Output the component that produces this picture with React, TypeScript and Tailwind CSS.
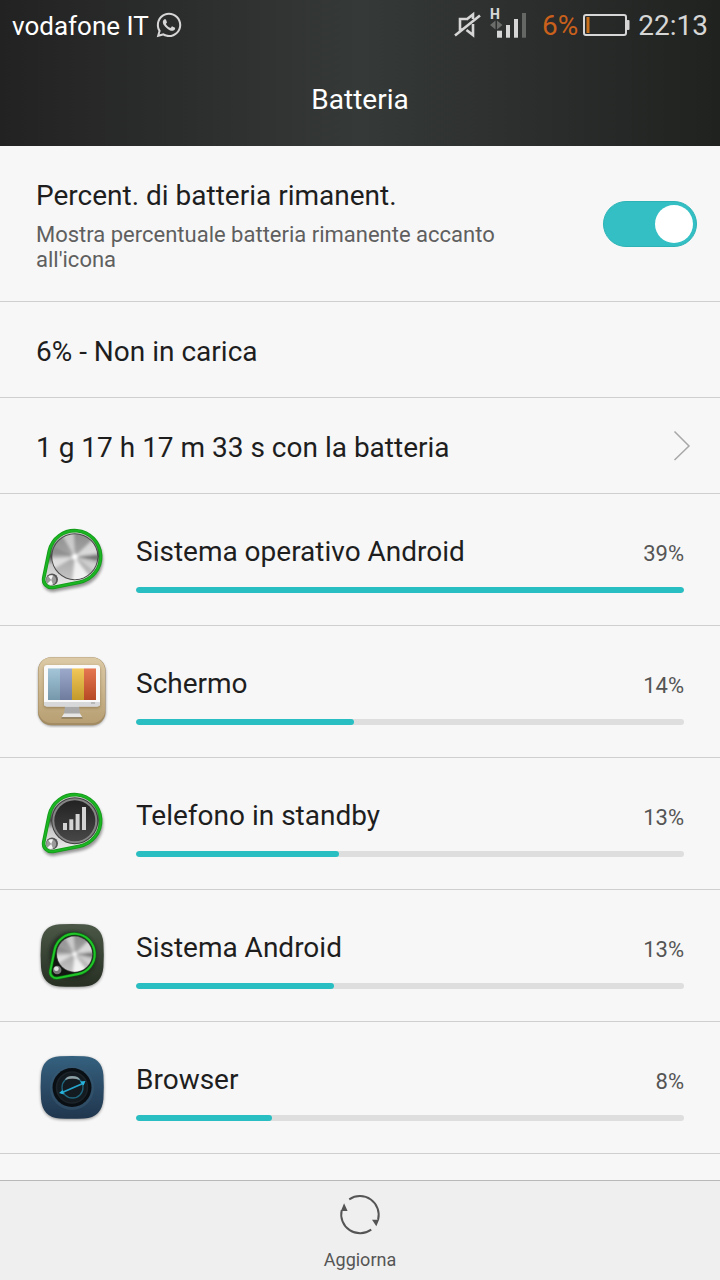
import { useState } from 'react';
import { FaWhatsapp } from 'react-icons/fa';

type IconName = 'knob' | 'screen' | 'standby' | 'system' | 'browser';

interface Usage {
  name: string;
  percent: number;
  bar: number;
  icon: IconName;
}

const usages: Usage[] = [
  { name: 'Sistema operativo Android', percent: 39, bar: 100, icon: 'knob' },
  { name: 'Schermo', percent: 14, bar: 39.8, icon: 'screen' },
  { name: 'Telefono in standby', percent: 13, bar: 37, icon: 'standby' },
  { name: 'Sistema Android', percent: 13, bar: 36.1, icon: 'system' },
  { name: 'Browser', percent: 8, bar: 24.8, icon: 'browser' },
];

const BELT = 'M13.3 26.9 A26 26 0 1 1 43.5 58.2 L17 63.4 A8 8 0 0 1 7.7 54.2 Z';
const SQUIRCLE =
  'M24 4.3 Q36 3.6 48 4.3 Q66 5 67.4 23 Q68.2 35 67.4 47 Q66 65.5 48 66.5 Q36 67.2 24 66.5 Q6.4 65.5 5 47 Q4.2 35 5 23 Q6.4 5 24 4.3 Z';

// Gradients and filters shared by all app icons
function IconDefs() {
  return (
    <svg width="0" height="0" className="absolute" aria-hidden="true">
      <defs>
        <linearGradient id="steel" x1="0" y1="0" x2="0" y2="1">
          <stop offset="0" stopColor="#8f8f8f" />
          <stop offset="0.5" stopColor="#a6a6a6" />
          <stop offset="1" stopColor="#c4c4c4" />
        </linearGradient>
        <linearGradient id="plate" x1="0" y1="0" x2="0" y2="1">
          <stop offset="0" stopColor="#e4e4e4" />
          <stop offset="0.45" stopColor="#4c4c4c" />
          <stop offset="0.6" stopColor="#c8c8c8" />
          <stop offset="1" stopColor="#eeeeee" />
        </linearGradient>
        <linearGradient id="darkDisc" x1="0" y1="0" x2="0" y2="1">
          <stop offset="0" stopColor="#222222" />
          <stop offset="1" stopColor="#474747" />
        </linearGradient>
        <linearGradient id="olive" x1="0" y1="0" x2="0" y2="1">
          <stop offset="0" stopColor="#4b5747" />
          <stop offset="1" stopColor="#273023" />
        </linearGradient>
        <linearGradient id="navy" x1="0" y1="0" x2="0" y2="1">
          <stop offset="0" stopColor="#34617f" />
          <stop offset="0.5" stopColor="#2b4b66" />
          <stop offset="1" stopColor="#20364e" />
        </linearGradient>
        <linearGradient id="sand" x1="0" y1="0" x2="0" y2="1">
          <stop offset="0" stopColor="#dccaa6" />
          <stop offset="1" stopColor="#b89f73" />
        </linearGradient>
        <linearGradient id="shine" x1="0" y1="0" x2="0" y2="1">
          <stop offset="0" stopColor="#ffffff" stopOpacity="0.18" />
          <stop offset="1" stopColor="#000000" stopOpacity="0.18" />
        </linearGradient>
        <clipPath id="discClip">
          <circle cx="38.8" cy="32.7" r="22.5" />
        </clipPath>
        <filter id="soft" x="-30%" y="-30%" width="160%" height="160%">
          <feGaussianBlur stdDeviation="1.8" />
        </filter>
      </defs>
    </svg>
  );
}

function Belt() {
  return (
    <>
      <path d={BELT} fill="url(#plate)" />
      <path d={BELT} fill="none" stroke="#149a1a" strokeWidth="3.6" strokeLinejoin="round" />
      <path d={BELT} fill="none" stroke="#1bb422" strokeWidth="2" strokeLinejoin="round" />
      <circle cx="16" cy="55.6" r="6" fill="#555555" />
      <circle cx="15.2" cy="56" r="5" fill="#9a9a9a" />
      <path d="M15.2 56 L11.5 59.5 A5 5 0 0 0 17 60.6 Z M15.2 56 L12.5 52.5 A4.5 4.5 0 0 1 17 51.5 Z" fill="#f4f4f4" />
    </>
  );
}

function SteelDisc() {
  return (
    <>
      <circle cx="38.8" cy="32.7" r="23.5" fill="#4a4a4a" />
      <circle cx="38.8" cy="32.7" r="22.5" fill="url(#steel)" />
      <g clipPath="url(#discClip)">
        <g filter="url(#soft)" fill="#ffffff">
          <path d="M38.8 32.7 L24 8 L38 6 Z" opacity="0.5" />
          <path d="M38.8 32.7 L36 60 L56 56 Z" opacity="0.8" />
          <path d="M38.8 32.7 L12 34 L14 47 Z" opacity="0.6" />
          <path d="M38.8 32.7 L60 12 L66 29 Z" opacity="0.6" />
          <path d="M38.8 32.7 L62 50 L66 40 Z" opacity="0.4" />
          <path d="M38.8 32.7 L64 30 L64 37 Z" fill="#555555" opacity="0.6" />
          <path d="M38.8 32.7 L12 20 L12 30 Z" fill="#666666" opacity="0.3" />
          <circle cx="38.8" cy="32.7" r="3" />
        </g>
      </g>
    </>
  );
}

function BeltShadow() {
  return (
    <path d={BELT} transform="translate(1 3)" fill="#000000" stroke="#000000" strokeWidth="3" opacity="0.4" filter="url(#soft)" />
  );
}

function AppIcon({ name }: { name: IconName }) {
  return (
    <svg viewBox="0 0 72 72" className="size-18 shrink-0" aria-hidden="true">
      {name === 'knob' && (
        <>
          <BeltShadow />
          <Belt />
          <SteelDisc />
        </>
      )}

      {name === 'standby' && (
        <>
          <BeltShadow />
          <Belt />
          <circle cx="38.8" cy="32.7" r="23.5" fill="#3f3f3f" />
          <circle cx="38.8" cy="32.7" r="22.5" fill="#858585" />
          <circle cx="38.8" cy="32.7" r="20.5" fill="url(#darkDisc)" />
          <g fill="#d4d4d4">
            <rect x="27" y="35" width="4" height="7" />
            <rect x="33.3" y="31.3" width="4" height="10.7" />
            <rect x="39.6" y="26" width="4" height="16" />
            <rect x="46" y="19" width="4" height="23" />
          </g>
        </>
      )}

      {name === 'system' && (
        <>
          <path d={SQUIRCLE} transform="translate(0 1)" fill="#000000" opacity="0.4" filter="url(#soft)" />
          <path d={SQUIRCLE} fill="url(#olive)" />
          <circle cx="37" cy="35" r="24" fill="#1d241b" opacity="0.7" filter="url(#soft)" />
          <g transform="translate(8.3 8.6) scale(0.78)">
            <path d={BELT} fill="#121712" stroke="#0a7a10" strokeWidth="4" />
            <path d={BELT} fill="none" stroke="#21c52a" strokeWidth="2.4" />
            <circle cx="16.5" cy="53" r="5.5" fill="#777777" />
            <circle cx="15.5" cy="51.5" r="3" fill="#e4e4e4" />
            <SteelDisc />
          </g>
        </>
      )}

      {name === 'screen' && (
        <>
          <rect x="2.5" y="3" width="67" height="67" rx="14" fill="#000000" opacity="0.45" filter="url(#soft)" />
          <rect x="2" y="1.2" width="67.5" height="68" rx="13" fill="#a38c64" />
          <rect x="2.5" y="1.5" width="66.5" height="65.5" rx="12.5" fill="url(#sand)" />
          <rect x="8" y="10" width="56" height="42" rx="3" fill="#6b5730" opacity="0.5" filter="url(#soft)" />
          <path d="M29 50 H43 L44 58 H28 Z" fill="#a9a9a9" />
          <path d="M28 57.5 H44 L46.5 61.5 H25.5 Z" fill="#e6e6e6" />
          <rect x="25.5" y="61.3" width="21" height="1.2" fill="#7a6a4c" />
          <rect x="8" y="9" width="56" height="41.5" rx="3" fill="#fafafa" />
          <path d="M8 46 H64 V47.5 Q64 50.5 61 50.5 H11 Q8 50.5 8 47.5 Z" fill="#d6d8da" />
          <rect x="12" y="12.5" width="12" height="31.5" fill="#8fb9cf" />
          <rect x="24" y="12.5" width="12" height="31.5" fill="#8797c0" />
          <rect x="36" y="12.5" width="12" height="31.5" fill="#eebb35" />
          <rect x="48" y="12.5" width="12" height="31.5" fill="#df5a2d" />
          <rect x="12" y="12.5" width="48" height="31.5" fill="url(#shine)" />
          <rect x="55" y="46" width="4" height="2" fill="#b8b8b8" />
        </>
      )}

      {name === 'browser' && (
        <>
          <path d={SQUIRCLE} transform="translate(0 1)" fill="#000000" opacity="0.4" filter="url(#soft)" />
          <path d={SQUIRCLE} fill="url(#navy)" />
          <circle cx="36" cy="36" r="22" fill="#3a5a72" opacity="0.5" />
          <circle cx="36" cy="35.5" r="19.5" fill="#0a0f14" />
          <circle cx="36" cy="35.5" r="15.5" fill="#141b20" stroke="#1c2429" strokeWidth="1.5" />
          <circle cx="36.5" cy="35.5" r="10.5" fill="none" stroke="#1f647b" strokeWidth="1.3" />
          <path d="M29 28 Q30 24 36 24 Q43 24 44 28 Q36 25.5 29 28 Z" fill="#a7b0b1" opacity="0.8" />
          <path d="M25 41 L48 31" stroke="#26a5cc" strokeWidth="1.8" />
          <path d="M23 41 L26.5 38 L28 42.5 Z M49.5 29 L44 29.5 L47.5 33.5 Z" fill="#26b5df" />
        </>
      )}
    </svg>
  );
}

function StatusBar() {
  return (
    <div className="flex h-[50px] items-center justify-between px-3 text-[28px] leading-8 text-[#d6d6d6]">
      <div className="flex items-center gap-1.5">
        <span className="pt-0.5 text-[26px] text-white">vodafone IT</span>
        <FaWhatsapp className="size-7" />
      </div>
      <div className="flex items-center gap-2">
        <svg viewBox="0 0 28 28" className="size-7" fill="none" stroke="currentColor" strokeWidth="2.6" aria-hidden="true">
          <path d="M14 8 H6 V18.5 H9 M12.5 8.5 L19 3.5 V8 M19 13 V24 L12.5 19" />
          <path d="M1 24.5 L26 4.5" />
        </svg>
        <svg viewBox="0 -6 36 44" className="h-11 w-9" fill="currentColor" aria-hidden="true">
          <text x="0" y="10" fontSize="14" fontWeight="800">H</text>
          <path d="M5.5 11.5 V20.5 L0 16 Z M7 11.5 V20.5 L12.5 16 Z" fill="#6b6d6b" />
          <rect x="7" y="21.7" width="5" height="7" />
          <rect x="16" y="16" width="4" height="12.7" />
          <rect x="24" y="10" width="4" height="18.7" />
          <rect x="32" y="4" width="4" height="24.7" fill="#656765" />
        </svg>
        <div className="ml-2 flex items-center gap-1">
          <span className="pt-0.5 text-[#c9601c]">6%</span>
          <svg viewBox="0 0 48 24" className="h-6 w-12" fill="none" aria-hidden="true">
            <rect x="2" y="2" width="42" height="20" rx="2" stroke="currentColor" strokeWidth="2" />
            <rect x="44.5" y="7" width="3" height="10" rx="1" fill="currentColor" />
            <rect x="4.5" y="4" width="3" height="16" fill="#c9701c" />
          </svg>
        </div>
        <span className="pt-0.5">22:13</span>
      </div>
    </div>
  );
}

function UsageRow({ name, percent, bar, icon }: Usage) {
  return (
    <li className="flex h-[132px] items-center gap-7 border-b border-[#cfcfcf] px-9">
      <AppIcon name={icon} />
      <div className="flex flex-1 flex-col gap-[17px] pt-[7px]">
        <div className="flex items-center justify-between">
          <span className="text-[28px] leading-9">{name}</span>
          <span className="pt-1 text-[22px] leading-8 text-[#555555]">{percent}%</span>
        </div>
        <div className="h-1.5 overflow-hidden rounded-full bg-[#dedede]">
          <div className="h-full rounded-full bg-[#29bfc2]" style={{ width: `${bar}%` }} />
        </div>
      </div>
    </li>
  );
}

export default function App() {
  const [showPercent, setShowPercent] = useState(true);

  return (
    <div className="flex min-h-screen flex-col bg-[#f7f7f7] font-[Roboto,sans-serif] text-[#1e1e1e]">
      <IconDefs />

      <header className="h-[146px] bg-linear-to-r from-[#222222] via-[#353937] to-[#202220] text-white">
        <StatusBar />
        <h1 className="pt-8 text-center text-[28px] leading-9">Batteria</h1>
      </header>

      <main className="flex-1">
        <div className="flex min-h-[156px] items-center gap-10 border-b border-[#cfcfcf] pr-[23px] pl-9">
          <label htmlFor="show-percent" className="flex flex-1 flex-col gap-2 pt-0.5">
            <span className="text-[28px] leading-9">Percent. di batteria rimanent.</span>
            <span className="text-[22px] leading-[25px] text-[#5f5f5f]">
              Mostra percentuale batteria rimanente accanto all'icona
            </span>
          </label>
          <input
            id="show-percent"
            type="checkbox"
            role="switch"
            checked={showPercent}
            onChange={(e) => setShowPercent(e.target.checked)}
            className="flex h-[46px] w-[94px] shrink-0 appearance-none items-center rounded-full border border-[#b5b5b5] bg-[#c8c8c8] px-[3px] before:size-[38px] before:rounded-full before:bg-white checked:justify-end checked:border-[#2cb3b6] checked:bg-[#33bfc3]"
          />
        </div>

        <div className="flex h-24 items-center border-b border-[#cfcfcf] px-9 pt-1 text-[28px] leading-9">
          6% - Non in carica
        </div>

        <button type="button" className="flex h-24 w-full items-center justify-between border-b border-[#cfcfcf] pr-7 pl-9 text-left text-[28px] leading-9">
          <span className="pt-1">1 g 17 h 17 m 33 s con la batteria</span>
          <svg viewBox="0 0 20 32" className="h-8 w-5" fill="none" stroke="#a8a8a8" strokeWidth="1.5" aria-hidden="true">
            <path d="M2.5 1.5 L17 16 L2.5 30" />
          </svg>
        </button>

        <ul>
          {usages.map((usage) => (
            <UsageRow key={usage.name} {...usage} />
          ))}
        </ul>
      </main>

      <footer className="flex h-[100px] justify-center border-t border-[#b9b9b9] bg-[#efefef]">
        <button type="button" className="flex flex-col items-center gap-3 pt-3 pb-2 text-[18px] leading-6 text-[#555555]">
          <svg viewBox="0 0 44 44" className="size-11" aria-hidden="true">
            <path d="M11 6.5 A19.3 19.3 0 0 1 40.5 27.5 M33.5 37.5 A19.3 19.3 0 0 1 3.3 17.5" fill="none" stroke="currentColor" strokeWidth="2" />
            <path d="M34.3 27.3 H41.5 L38.7 34 Z M5.7 10.6 L2.5 18.3 H9.3 Z" fill="currentColor" />
          </svg>
          Aggiorna
        </button>
      </footer>
    </div>
  );
}
